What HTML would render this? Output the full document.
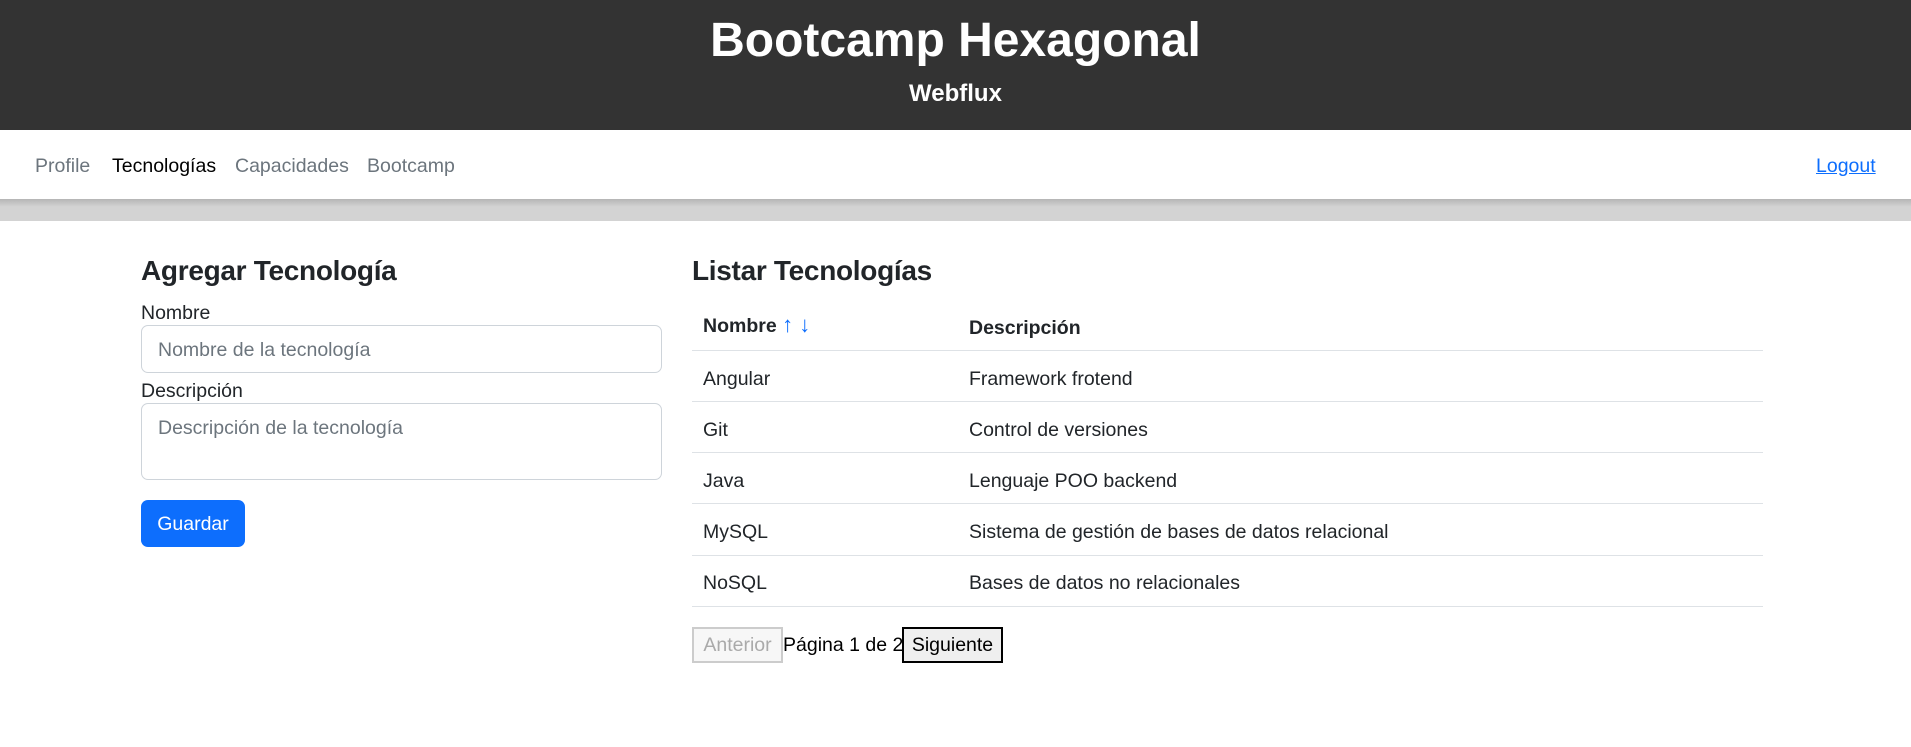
<!DOCTYPE html>
<html><head><meta charset="utf-8"><style>
*{box-sizing:border-box;margin:0;padding:0}
body{width:1911px;height:747px;background:#fff;font-family:"Liberation Sans",sans-serif;font-size:19.5px;color:#212529;position:relative;overflow:hidden}
.hdr{position:absolute;left:0;top:0;width:1911px;height:130px;background:#333;color:#fff;text-align:center}
.hdr h1{position:absolute;top:11px;width:100%;font-size:48px;font-weight:700;line-height:60px}
.hdr h2{position:absolute;top:79px;width:100%;font-size:24px;font-weight:700;line-height:30px}
.nav{position:absolute;top:130px;left:0;width:1911px;height:69px;background:#fff}
.nav a{position:absolute;top:24px;color:#6c757d;text-decoration:none;line-height:24px}
.bar{position:absolute;top:199px;left:0;width:1911px;height:22px;background:linear-gradient(#b5b5b5,#d3d3d3 35%,#d3d3d3)}
.a{position:absolute;white-space:nowrap}
h3{font-size:28px;font-weight:700;line-height:34px;letter-spacing:-0.3px}
.inp{position:absolute;border:1px solid #ced4da;border-radius:7px;background:#fff;color:#6c757d;padding-left:16px}
.line{position:absolute;left:692px;width:1071px;height:1px;background:#dee2e6}
.btn{position:absolute;border:2px solid #767676;background:#efefef;text-align:center;line-height:32px}
</style></head><body>
<div class="hdr"><h1>Bootcamp Hexagonal</h1><h2>Webflux</h2></div>
<div class="nav">
<a style="left:35px">Profile</a>
<a style="left:112px;color:#000">Tecnologías</a>
<a style="left:235px">Capacidades</a>
<a style="left:367px">Bootcamp</a>
<a style="left:1816px;color:#0d6efd;text-decoration:underline">Logout</a>
</div>
<div class="bar"></div>
<h3 class="a" style="left:141px;top:254px">Agregar Tecnología</h3>
<div class="a" style="left:141px;top:302px">Nombre</div>
<div class="inp" style="left:141px;top:325px;width:521px;height:48px;line-height:48px">Nombre de la tecnología</div>
<div class="a" style="left:141px;top:380px">Descripción</div>
<div class="inp" style="left:141px;top:403px;width:521px;height:77px;padding-top:12px;line-height:24px">Descripción de la tecnología</div>
<div class="a" style="left:141px;top:500px;width:104px;height:47px;background:#0d6efd;color:#fff;border-radius:7px;text-align:center;line-height:49px">Guardar</div>
<h3 class="a" style="left:692px;top:254px">Listar Tecnologías</h3>
<div class="a" style="left:703px;top:312px;font-weight:700">Nombre <span style="color:#0d6efd;font-weight:400;font-size:22px">↑ ↓</span></div>
<div class="a" style="left:969px;top:317px;font-weight:700">Descripción</div>
<div class="line" style="top:350px"></div>
<div class="a" style="left:703px;top:368px">Angular</div><div class="a" style="left:969px;top:368px">Framework frotend</div>
<div class="line" style="top:401px"></div>
<div class="a" style="left:703px;top:419px">Git</div><div class="a" style="left:969px;top:419px">Control de versiones</div>
<div class="line" style="top:452px"></div>
<div class="a" style="left:703px;top:470px">Java</div><div class="a" style="left:969px;top:470px">Lenguaje POO backend</div>
<div class="line" style="top:503px"></div>
<div class="a" style="left:703px;top:521px">MySQL</div><div class="a" style="left:969px;top:521px">Sistema de gestión de bases de datos relacional</div>
<div class="line" style="top:555px"></div>
<div class="a" style="left:703px;top:572px">NoSQL</div><div class="a" style="left:969px;top:572px">Bases de datos no relacionales</div>
<div class="line" style="top:606px"></div>
<div class="btn" style="left:692px;top:627px;width:91px;height:36px;color:#aaa;border-color:#ccc;background:#f7f7f7">Anterior</div>
<div class="a" style="left:783px;top:634px;color:#000">Página 1 de 2</div>
<div class="btn" style="left:902px;top:627px;width:101px;height:36px;color:#000;border-color:#000">Siguiente</div>
</body></html>
